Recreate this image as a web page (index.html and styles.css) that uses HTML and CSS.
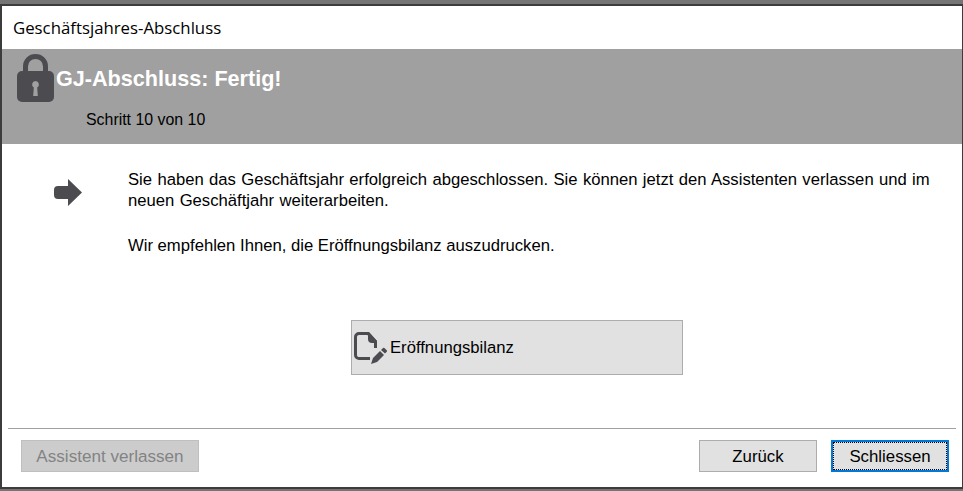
FILE: index.html
```html
<!DOCTYPE html>
<html lang="de">
<head>
<meta charset="utf-8">
<title>Geschäftsjahres-Abschluss</title>
<link rel="stylesheet" href="styles.css">
</head>
<body>
<div class="window">
  <div class="titlebar">Geschäftsjahres-Abschluss</div>
  <header class="banner">
    <svg class="lock" viewBox="0 0 38 48" aria-hidden="true"><path fill="none" stroke="#4c4c50" stroke-width="5" d="M8.500 20v-7.500C8.500 6.500 13 2.500 18.500 2.500s10 4 10 10V20"/><rect fill="#4c4c50" y="17" width="37" height="31" rx="5"/><path fill="#a0a0a0" d="M18.500 27a3.500 3.500 0 0 1 1.700 6.500l.6 8.500h-4.600l.6-8.500A3.500 3.500 0 0 1 18.500 27z"/></svg>
    <div class="banner-text">
      <h1 class="banner-title">GJ-Abschluss: Fertig!</h1>
      <p class="banner-step">Schritt 10 von 10</p>
    </div>
  </header>
  <main class="content">
    <div class="message">
      <svg class="arrow" viewBox="0 0 28 27" aria-hidden="true"><path fill="#4c4c50" d="M14 0l14 13.500L14 27v-7H4a4 4 0 0 1-4-4v-5a4 4 0 0 1 4-4h10z"/></svg>
      <div class="message-text">
        <p class="para para-spaced">Sie haben das Geschäftsjahr erfolgreich abgeschlossen. Sie können jetzt den Assistenten verlassen und im neuen Geschäftjahr weiterarbeiten.</p>
        <p class="para">Wir empfehlen Ihnen, die Eröffnungsbilanz auszudrucken.</p>
      </div>
    </div>
    <div class="action">
      <button class="btn-report" type="button">
        <svg class="doc" viewBox="0 0 33 33" aria-hidden="true"><path fill="none" stroke="#4c4c50" stroke-width="3" stroke-linejoin="round" d="M16 27.500H5a3.500 3.500 0 0 1-3.500-3.500V6A3.500 3.500 0 0 1 5 2.500h9l7.500 8V17"/><path fill="#4c4c50" d="M14 1h1l8 9v2h-5a4 4 0 0 1-4-4z"/><path fill="#4c4c50" d="M17 33l2-6 7-7 4 4-7 7zM27 19l2-2a1 1 0 0 1 1.400 0l2.300 2.300a1 1 0 0 1 0 1.400l-1.700 1.800z"/></svg>
        <span>Eröffnungsbilanz</span>
      </button>
    </div>
  </main>
  <footer class="footer">
    <button class="btn btn-disabled" type="button" disabled>Assistent verlassen</button>
    <div class="footer-right">
      <button class="btn btn-back" type="button">Zurück</button>
      <button class="btn btn-primary" type="button"><span class="focus">Schliessen</span></button>
    </div>
  </footer>
</div>
</body>
</html>
```
FILE: styles.css
```css
* { box-sizing: border-box; }
html, body { margin: 0; height: 100%; }
body {
  background: #757575;
  padding-top: 4px;
  padding-bottom: 2px;
  font-family: "Liberation Sans", Arial, sans-serif;
  overflow: hidden;
}
.window {
  height: 485px;
  background: #fff;
  border: 2px solid #3c3c3c;
  border-right-width: 1px;
  display: flex;
  flex-direction: column;
}
.titlebar {
  height: 43px;
  padding: 10px 0 0 11px;
  font: 16.8px/24px "Open Sans", "Noto Sans", sans-serif;
  color: #000;
}
.banner {
  height: 95px;
  background: #a0a0a0;
  display: flex;
  padding: 5px 0 0 15px;
}
.lock { width: 38px; height: 48px; flex: none; }
.banner-text { margin-left: 1px; }
.banner-title {
  margin: 13px 0 0;
  font-size: 21.6px;
  line-height: 24px;
  font-weight: 700;
  color: #fff;
}
.banner-step {
  margin: 20px 0 0 30px;
  font-size: 15.9px;
  line-height: 18px;
  color: #000;
}
.content { flex: 1; display: flex; flex-direction: column; }
.message { display: flex; padding: 25px 20px 0 52px; }
.arrow { width: 28px; height: 27px; flex: none; margin-top: 10px; }
.message-text { margin-left: 46px; }
.para {
  margin: 0 0 24px;
  font-size: 16.67px;
  line-height: 21px;
  color: #000;
}
.para-spaced { word-spacing: 0.7px; }
.action { display: flex; justify-content: center; margin-top: 40px; padding-left: 70px; }
.btn-report {
  width: 332px;
  height: 55px;
  display: flex;
  align-items: center;
  padding: 0 0 0 2px;
  background: #e1e1e1;
  border: 1px solid #adadad;
  font: 16.67px "Liberation Sans", Arial, sans-serif;
  color: #000;
}
.doc { width: 33px; height: 33px; flex: none; margin-right: 3px; }
.footer {
  margin: 0 6px;
  height: 59px;
  border-top: 1px solid #a0a0a0;
  display: flex;
  justify-content: space-between;
  padding: 11px 7px 0 13px;
}
.footer-right { display: flex; gap: 14px; }
.btn {
  height: 32px;
  padding: 1px 0 0;
  font: 16.8px "Liberation Sans", Arial, sans-serif;
  color: #000;
  background: #e1e1e1;
  border: 1px solid #adadad;
}
.btn-disabled { width: 178px; font-size: 17.1px; background: #cccccc; border-color: #bfbfbf; color: #838383; }
.btn-back { width: 118px; }
.btn-primary { width: 118px; border: 2px solid #0078d7; display: flex; padding: 0; }
.focus { flex: 1; display: flex; align-items: center; justify-content: center; border: 1px dotted #000; padding-top: 1px; }
```
